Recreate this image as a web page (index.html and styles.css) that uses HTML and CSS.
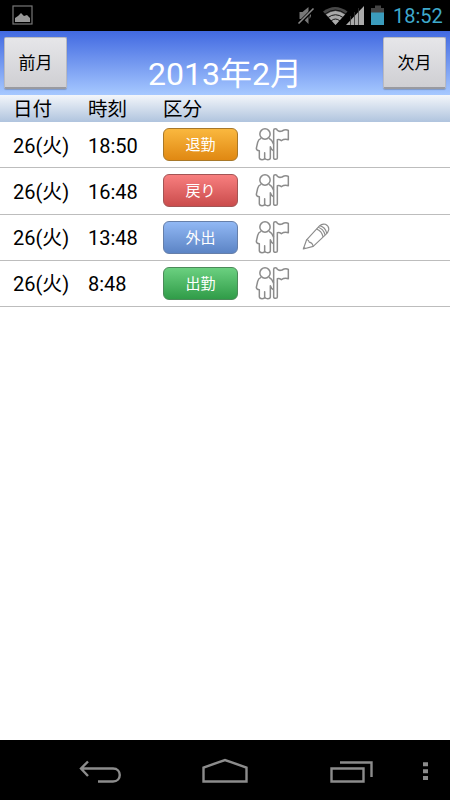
FILE: index.html
```html
<!DOCTYPE html>
<html lang="ja">
<head>
  <meta charset="UTF-8" />
  <meta name="viewport" content="width=device-width, initial-scale=1" />
  <title>2013年2月</title>
  <link rel="stylesheet" href="styles.css">
</head>
<body>
  <!-- アイコン定義 -->
  <svg class="defs" width="0" height="0">
    <symbol id="person" viewBox="315 20 105 105">
      <circle cx="345" cy="41" r="15.5" />
      <path d="M333 54 Q325 57 323 66 L319 84 Q319 91 328 91 V113 Q329 118 336 118 Q344 118 344 113 V97 V113 Q346 118 353 118 Q361 118 361 112 V79 Q364 89 371 91 M371 72 Q366 58 357 54" />
      <path d="M371 30 Q371 25 376 25 Q381 25 382 30 Q387 35 396 32 Q407 25 415 30 V58 Q403 55 394 61 Q389 57 382 58 V113 Q382 117 377 117 Q371 117 371 113 Z" />
    </symbol>
    <symbol id="pencil" viewBox="455 30 85 85">
      <path d="M459 109 L469 81 L508 39 Q516 31 526 34 Q538 40 536 51 Q535 58 526 66 L489 101 Z" />
      <path d="M469 81 Q475 80 477 88 Q487 90 489 101 M499 48 Q515 54 519 72 M504 43 Q520 48 525 66 M509 38 Q526 43 530 61 M460 104 L465 107" />
    </symbol>
  </svg>

  <!-- ステータスバー -->
  <div class="status">
    <svg class="picture" width="22" height="21" viewBox="0 0 22 21">
      <rect x="1" y="1" width="19" height="18" fill="none" stroke="#777" stroke-width="1.2" />
      <path d="M3 17 V13 L6 11 L9 8 L12 11 L15 10 L18 13 V17 Z" fill="#999" />
    </svg>
    <svg class="signals" width="93" height="24" viewBox="-3 0 93 24">
      <g transform="translate(-2.500 0)">
        <path d="M2 8 H5 L11 3 V20 L6 15 H2 Z M12 8 Q15 11 12 15 Z" fill="#777" />
        <path d="M1 20 L16 5" stroke="#000" stroke-width="3.500" />
        <path d="M1 19.500 L16 4.500" stroke="#888" stroke-width="1.6" />
      </g>
      <path d="M23 7.500 Q35 -1.500 47.500 7.500 L35.500 21 Z" fill="#484848" />
      <path d="M26 10.500 Q35.500 3.500 45 10.500 L35.500 21 Z" fill="#aaa" />
      <path d="M25 10 Q35.500 2 46 10 M28 13.500 Q35.500 8 43 13.500 M31 17 Q35.500 13 40 17" fill="none" stroke="#151515" stroke-width="1" />
      <path d="M46 21 L64 2 V21 Z" fill="#aaa" />
      <path d="M50.500 21 V12 M54.500 21 V8 M58.500 21 V4" stroke="#333" stroke-width="0.8" />
      <path d="M71 4 H75 V1.500 H81 V4 H84 V9 H71 Z" fill="#444" />
      <rect x="71" y="8.500" width="13" height="12.500" fill="#3b9cbd" />
    </svg>
    <span class="clock">18:52</span>
  </div>

  <!-- ヘッダー -->
  <header class="header">
    <button class="month-btn">前月</button>
    <h1>2013年2月</h1>
    <button class="month-btn">次月</button>
  </header>

  <div class="row head">
    <span>日付</span>
    <span>時刻</span>
    <span>区分</span>
  </div>

  <!-- 打刻一覧 -->
  <main class="list">
    <div class="row">
      <span>26(火)</span>
      <span>18:50</span>
      <span class="tag leave">退勤</span>
      <svg class="icon person"><use href="#person" /></svg>
    </div>
    <div class="row">
      <span>26(火)</span>
      <span>16:48</span>
      <span class="tag back">戻り</span>
      <svg class="icon person"><use href="#person" /></svg>
    </div>
    <div class="row">
      <span>26(火)</span>
      <span>13:48</span>
      <span class="tag out">外出</span>
      <svg class="icon person"><use href="#person" /></svg>
      <svg class="icon pencil"><use href="#pencil" /></svg>
    </div>
    <div class="row">
      <span>26(火)</span>
      <span>8:48</span>
      <span class="tag attend">出勤</span>
      <svg class="icon person"><use href="#person" /></svg>
    </div>
  </main>

  <!-- ナビゲーションバー -->
  <nav class="navbar">
    <svg width="450" height="60" viewBox="0 0 450 60" fill="none" stroke="#8c8c8c" stroke-width="2.400">
      <path d="M88 21.500 L81 28.500 L88 36 M81 28.500 H113 C122 28.500 122 41.500 113 41.500 H98" />
      <path d="M203.500 41.500 V27.500 L225 20 L246.500 27.500 V41.500 Z" />
      <path d="M331.500 28.500 H363.500 V41.500 H331.500 Z M340 22.500 H371.500 V37" />
      <path d="M423 24.300 H428 M423 31.200 H428 M423 38.100 H428" stroke-width="4" />
    </svg>
  </nav>
</body>
</html>
```

FILE: styles.css
```css
* {
  box-sizing: border-box;
}
body {
  margin: 0;
  height: 100vh;
  display: flex;
  flex-direction: column;
  background: #fff;
  color: #000;
  font-family: Roboto, "Noto Sans CJK JP", sans-serif;
  overflow: hidden;
}
.defs {
  position: absolute;
}
/* Status bar */
.status {
  display: flex;
  align-items: center;
  height: 31px;
  padding: 0 7px 0 12px;
  background: #000;
}
.signals {
  margin-left: auto;
}
.clock {
  width: 50px;
  margin-left: 3px;
  padding-top: 2px;
  color: #3fa9cc;
  font-size: 20px;
  line-height: 31px;
}
/* Header */
.header {
  display: flex;
  justify-content: space-between;
  height: 64px;
  padding: 6px 4px 0;
  background: linear-gradient(#4169e1, #a6c8ff);
}
h1 {
  margin: 13px 0 0;
  color: #fff;
  font-size: 32px;
  font-weight: 400;
  line-height: 48px;
}
.month-btn {
  width: 63px;
  height: 52px;
  padding: 0 0 2px;
  border: 1px solid #b9bac0;
  border-bottom: 2px solid #999aa0;
  border-radius: 2px;
  background: linear-gradient(#e6e6e9, #cfcfd3);
  box-shadow: 0 1px 1px rgba(0,0,0,0.2);
  color: #000;
  font-family: inherit;
  font-size: 17px;
}
/* Rows */
.row {
  display: grid;
  grid-template-columns: 75px 75px 92px 47px 28px;
  align-items: center;
  height: 46.25px;
  padding-left: 13px;
  border-bottom: 1px solid #bdbdbd;
  font-size: 20px;
  line-height: 26px;
}
.row > span:not(.tag) {
  padding-top: 2px;
}
.row.head {
  height: 27px;
  border-bottom: 0;
  background: linear-gradient(#f3f6fa, #b0c4de);
  font-size: 19.5px;
}
.tag {
  width: 75px;
  height: 33px;
  border: 1px solid;
  border-radius: 6px;
  color: #fff;
  font-size: 15px;
  line-height: 32px;
  text-align: center;
}
.leave {
  background: linear-gradient(#fab83f, #e08812);
  border-color: #a87829;
}
.back {
  background: linear-gradient(#f87f7f, #ca4c4c);
  border-color: #a35555;
}
.out {
  background: linear-gradient(#91b8f4, #5c84c5);
  border-color: #667fa9;
}
.attend {
  background: linear-gradient(#6bd080, #309c48);
  border-color: #4b8a59;
}
.icon {
  fill: none;
  stroke: #8c8c8c;
  stroke-width: 4.5;
  stroke-linejoin: round;
}
.person {
  width: 35px;
  height: 35px;
}
.pencil {
  width: 28px;
  height: 28px;
  stroke-width: 3.5;
}
/* Navigation bar */
.navbar {
  height: 60px;
  margin-top: auto;
  background: #000;
}
```
